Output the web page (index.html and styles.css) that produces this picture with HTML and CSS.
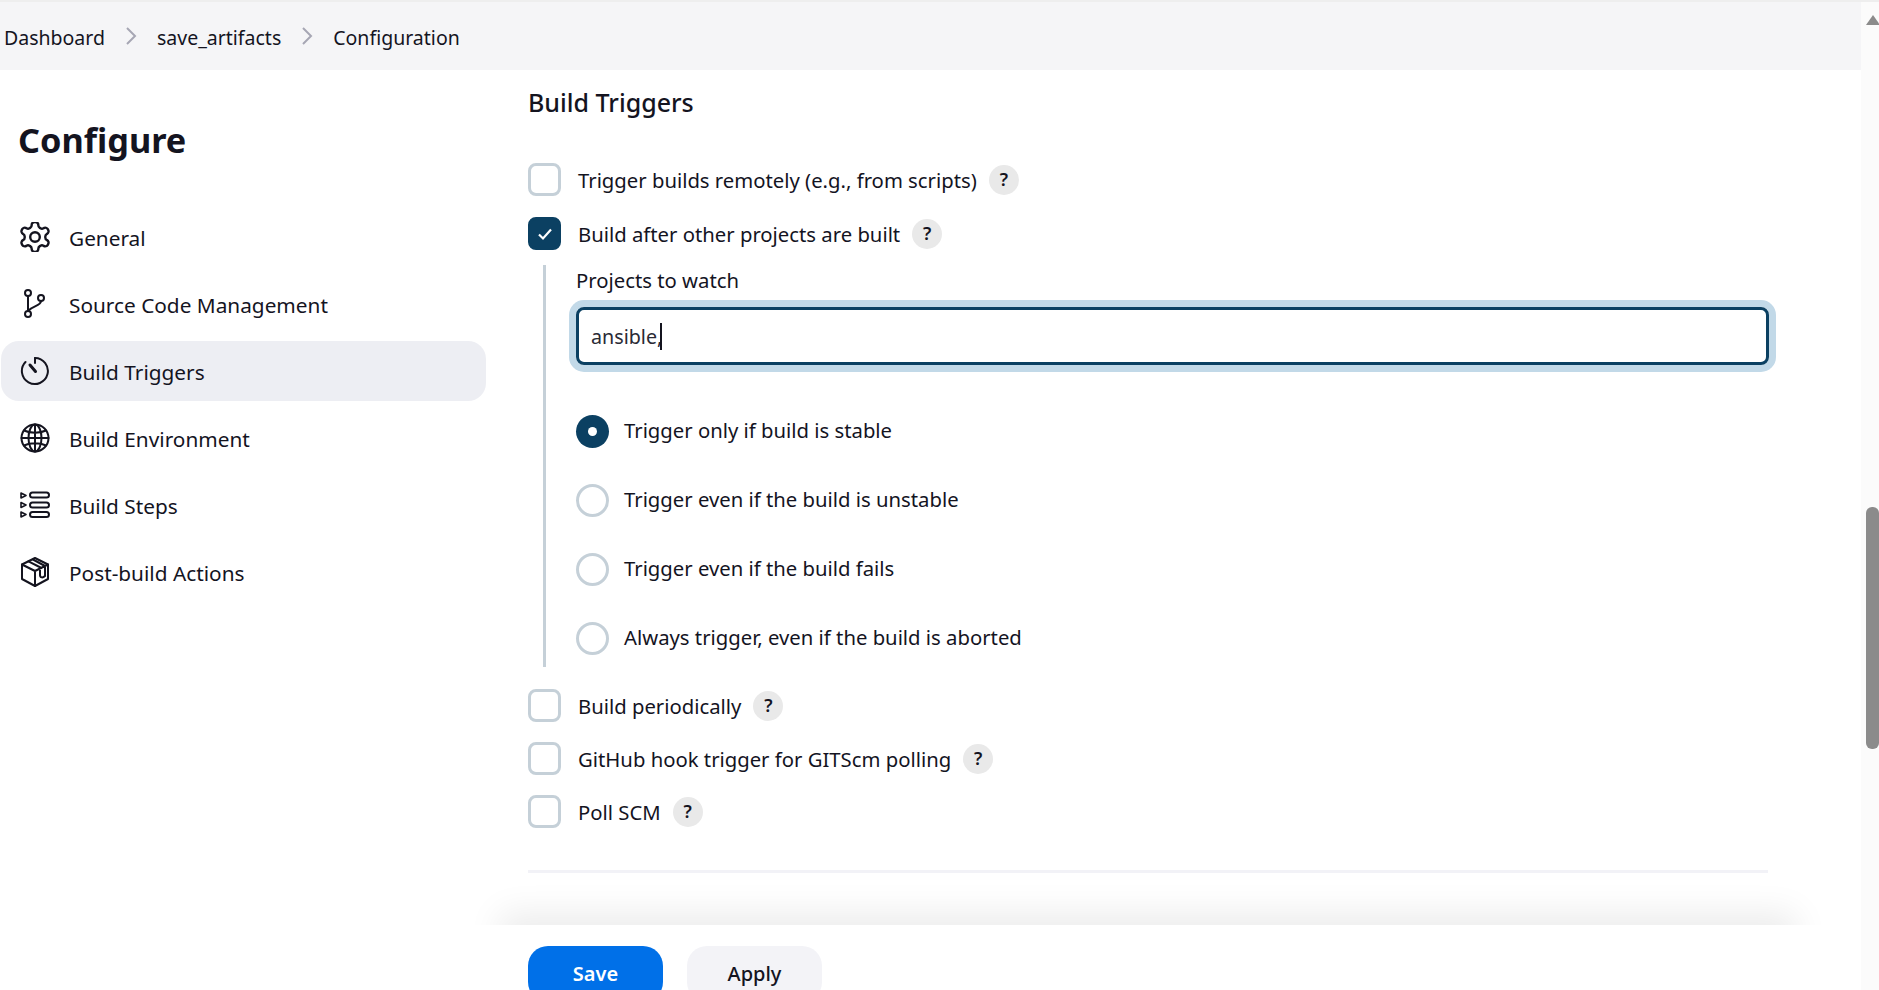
FILE: index.html
```html
<!DOCTYPE html>
<html lang="en">
<head>
    <meta charset="UTF-8">
    <title>save_artifacts Config</title>
    <link rel="stylesheet" href="styles.css">
</head>
<body>
    <div id="shell">
        <div id="page">
            <nav id="crumbs">
                <a>Dashboard</a>
                <svg class="chevron" viewBox="0 0 12 20"><path d="M2 2l8 8-8 8"/></svg>
                <a>save_artifacts</a>
                <svg class="chevron" viewBox="0 0 12 20"><path d="M2 2l8 8-8 8"/></svg>
                <a>Configuration</a>
            </nav>
            <div id="columns">
                <aside id="side">
                    <h1>Configure</h1>
                    <ul id="side-nav">
                        <li>
                            <svg class="icon" viewBox="2 2 20 20"><path d="M12.22 2h-.44a2 2 0 0 0-2 2v.18a2 2 0 0 1-1 1.73l-.43.25a2 2 0 0 1-2 0l-.15-.08a2 2 0 0 0-2.73.73l-.22.38a2 2 0 0 0 .73 2.73l.15.1a2 2 0 0 1 1 1.72v.51a2 2 0 0 1-1 1.74l-.15.09a2 2 0 0 0-.73 2.73l.22.38a2 2 0 0 0 2.73.73l.15-.08a2 2 0 0 1 2 0l.43.25a2 2 0 0 1 1 1.73V20a2 2 0 0 0 2 2h.44a2 2 0 0 0 2-2v-.18a2 2 0 0 1 1-1.73l.43-.25a2 2 0 0 1 2 0l.15.08a2 2 0 0 0 2.73-.73l.22-.39a2 2 0 0 0-.73-2.73l-.15-.08a2 2 0 0 1-1-1.74v-.5a2 2 0 0 1 1-1.74l.15-.09a2 2 0 0 0 .73-2.73l-.22-.38a2 2 0 0 0-2.73-.73l-.15.08a2 2 0 0 1-2 0l-.43-.25a2 2 0 0 1-1-1.73V4a2 2 0 0 0-2-2z" stroke-width="1.6"/><circle cx="12" cy="12" r="3.2" stroke-width="1.6"/></svg>
                            General
                        </li>
                        <li>
                            <svg class="icon" viewBox="0 0 30 30"><circle cx="8" cy="4" r="3"/><circle cx="21" cy="9" r="3"/><circle cx="8" cy="25" r="3"/><path d="M8 7v15M21 12c0 5-9 5-13 10"/></svg>
                            Source Code Management
                        </li>
                        <li class="current">
                            <svg class="icon" viewBox="0 0 30 30"><path d="M15 2a13 13 0 1 1-9.500 4"/><path d="M15 2v5"/><path d="M15.500 15.500L10 9" stroke-width="3"/></svg>
                            Build Triggers
                        </li>
                        <li>
                            <svg class="icon" viewBox="0 0 30 30"><circle cx="15" cy="15" r="13.500"/><ellipse cx="15" cy="15" rx="6.500" ry="13.500"/><path d="M15 1.500v27M1.500 15h27M4 7.500c6 3 16 3 22 0M4 22.500c6-3 16-3 22 0"/></svg>
                            Build Environment
                        </li>
                        <li>
                            <svg class="icon" viewBox="0 0 30 30"><path stroke-width="1.6" d="M1 3l5 2.500L1 8zM1 12.500l5 2.500-5 2.500zM1 22l5 2.500L1 27z"/><rect x="10" y="2.500" width="19" height="5" rx="2.500"/><rect x="10" y="12.500" width="19" height="5" rx="2.500"/><rect x="10" y="22" width="19" height="5" rx="2.500"/></svg>
                            Build Steps
                        </li>
                        <li>
                            <svg class="icon" viewBox="0 0 30 30"><path d="M15 1l13 6.500V22l-13 7-13-7V7.500z"/><path d="M2 7.500L15 14l13-6.500M15 14v15M8.500 4.300L21.500 11M13 2.500L25 9M20 11v7c0 3 3 3 5 1v-9"/></svg>
                            Post-build Actions
                        </li>
                    </ul>
                </aside>
                <main id="content">
                    <h2>Build Triggers</h2>
                    <div class="check-row">
                        <span class="check"></span>
                        <label>Trigger builds remotely (e.g., from scripts)</label>
                        <span class="help">?</span>
                    </div>
                    <div class="check-row">
                        <span class="check on"><svg viewBox="0 0 16 16"><path d="M2 8.500l4 4L14 3.500"/></svg></span>
                        <label>Build after other projects are built</label>
                        <span class="help">?</span>
                    </div>
                    <section id="nested">
                        <div class="field-label">Projects to watch</div>
                        <div id="watch-input"><span>ansible,</span><i class="caret"></i></div>
                        <div id="radios">
                            <div class="radio-row"><span class="radio on"></span>Trigger only if build is stable</div>
                            <div class="radio-row"><span class="radio"></span>Trigger even if the build is unstable</div>
                            <div class="radio-row"><span class="radio"></span>Trigger even if the build fails</div>
                            <div class="radio-row"><span class="radio"></span>Always trigger, even if the build is aborted</div>
                        </div>
                    </section>
                    <div class="check-row">
                        <span class="check"></span>
                        <label>Build periodically</label>
                        <span class="help">?</span>
                    </div>
                    <div class="check-row">
                        <span class="check"></span>
                        <label>GitHub hook trigger for GITScm polling</label>
                        <span class="help">?</span>
                    </div>
                    <div class="check-row">
                        <span class="check"></span>
                        <label>Poll SCM</label>
                        <span class="help">?</span>
                    </div>
                    <hr id="rule">
                    <div id="fade"><div id="fade-edge"></div></div>
                    <div id="actions">
                        <button class="btn save">Save</button>
                        <button class="btn">Apply</button>
                    </div>
                </main>
            </div>
        </div>
        <div id="scrollbar">
            <div id="arrow"></div>
            <div id="thumb"></div>
        </div>
    </div>
</body>
</html>
```
FILE: styles.css
```css
*{
    margin: 0;
    padding: 0;
    box-sizing: border-box;
}
ul{
    list-style: none;
}
html,body{
    height: 990px;
    overflow: hidden;
}
body{
    background: #fff;
    color: #14141f;
    font-family: "Noto Sans", "Open Sans", sans-serif;
    font-size: 20.3px;
    border-top: 2px solid #eeeeee;
}
#shell{
    display: flex;
    height: 988px;
}
#page{
    flex: 1;
    min-width: 0;
    overflow: hidden;
}
#crumbs{
    display: flex;
    align-items: center;
    height: 68px;
    padding: 3px 0 0 4px;
    background: #f5f5f7;
    font-size: 19.5px;
}
.chevron{
    width: 12px;
    height: 20px;
    margin: -3px 20px 0;
    fill: none;
    stroke: #a6a6b4;
    stroke-width: 2;
}
#columns{
    display: grid;
    grid-template-columns: 528px 1fr;
}
#side h1{
    font-size: 34.300px;
    font-weight: 700;
    line-height: 48px;
    padding: 46px 0 0 18px;
    margin-bottom: 43px;
}
#side-nav{
    width: 485px;
    margin-left: 1px;
}
#side-nav li{
    display: flex;
    align-items: center;
    gap: 19px;
    height: 60px;
    margin-bottom: 7px;
    padding: 1px 0 0 19px;
    border-radius: 18px;
    font-size: 20.8px;
}
#side-nav .current{
    background: #edeef3;
}
.icon{
    width: 30px;
    height: 30px;
    flex: none;
    margin-top: -2px;
    fill: none;
    stroke: #14141f;
    stroke-width: 2;
    stroke-linecap: round;
    stroke-linejoin: round;
}
#content{
    width: 1240px;
}
h2{
    font-size: 25px;
    font-weight: 500;
    line-height: 64px;
    margin-bottom: 29px;
}
.check-row{
    display: flex;
    align-items: center;
    height: 33px;
    margin-bottom: 20px;
}
h2 + .check-row{
    margin-bottom: 21px;
}
.check{
    display: flex;
    align-items: center;
    justify-content: center;
    width: 33px;
    height: 33px;
    margin-right: 17px;
    border: 3px solid #c5d0d8;
    border-radius: 8px;
}
.check.on{
    background: #0b4062;
    border-color: #0b4062;
}
.check svg{
    width: 16px;
    height: 16px;
    fill: none;
    stroke: #fff;
    stroke-width: 2.2;
}
.help{
    width: 30px;
    height: 30px;
    margin-left: 12px;
    border-radius: 50%;
    background: #e9e9e9;
    font-size: 18px;
    font-weight: 600;
    line-height: 28px;
    text-align: center;
}
#nested{
    height: 402px;
    margin: -5px 0 22px 15px;
    padding-left: 30px;
    border-left: 3px solid #c5d0d8;
}
.field-label{
    line-height: 30px;
    margin-bottom: 12px;
}
#watch-input{
    display: flex;
    align-items: center;
    width: 1193px;
    height: 58px;
    padding-left: 12px;
    border: 3px solid #0b4062;
    border-radius: 8px;
    box-shadow: 0 0 0 7px #c2d9e8;
    font-size: 19.7px;
    color: #2a2a35;
}
.caret{
    width: 2px;
    height: 27px;
    background: #14141f;
    margin-left: -2px;
}
#radios{
    margin-top: 50px;
}
.radio-row{
    display: flex;
    align-items: flex-start;
    gap: 15px;
    height: 33px;
    margin-bottom: 36px;
    line-height: 31px;
}
.radio{
    width: 33px;
    height: 33px;
    border: 3px solid #c5d0d8;
    border-radius: 50%;
}
.radio.on{
    background: #0b4062;
    border: 0;
    position: relative;
}
.radio.on::after{
    content: "";
    position: absolute;
    left: 12px;
    top: 12px;
    width: 9px;
    height: 9px;
    border-radius: 50%;
    background: #fff;
}
#rule{
    border: 0;
    height: 3px;
    margin-top: 42px;
    background: #f2f2f7;
}
#fade{
    height: 52px;
    margin: 0 -80px;
    padding: 0 60px;
    overflow: hidden;
}
#fade-edge{
    height: 30px;
    margin-top: 52px;
    box-shadow: 0 -4px 34px 8px rgba(0, 0, 0, 0.08);
}
#actions{
    display: flex;
    gap: 24px;
    margin-top: 21px;
}
.btn{
    width: 135px;
    height: 56px;
    padding-bottom: 2px;
    border: 0;
    border-radius: 20px;
    background: #f3f3f7;
    color: #14141f;
    font-family: inherit;
    font-size: 20px;
    font-weight: 500;
}
.btn.save{
    background: #0070e8;
    color: #fff;
    font-weight: 600;
}
#scrollbar{
    width: 18px;
    flex: none;
    padding: 13px 0 0 5px;
    background: #fbfbfb;
}
#arrow{
    width: 14px;
    height: 10px;
    background: #8b8b8b;
    clip-path: polygon(50% 0, 100% 100%, 0 100%);
}
#thumb{
    height: 242px;
    margin-top: 482px;
    background: #8b8b8b;
    border-radius: 6px;
}
```
